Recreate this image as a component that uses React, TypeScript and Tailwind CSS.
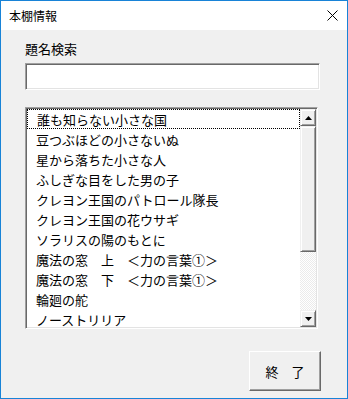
const titles = [
  "誰も知らない小さな国",
  "豆つぶほどの小さないぬ",
  "星から落ちた小さな人",
  "ふしぎな目をした男の子",
  "クレヨン王国のパトロール隊長",
  "クレヨン王国の花ウサギ",
  "ソラリスの陽のもとに",
  "魔法の窓　上　＜力の言葉①＞",
  "魔法の窓　下　＜力の言葉①＞",
  "輪廻の舵",
  "ノーストリリア",
]

const font = { fontFamily: '"Noto Sans CJK JP", "Noto Sans", sans-serif' }

const Arrow = ({ up }: { up?: boolean }) => (
  <svg width="7" height="4" viewBox="0 0 7 4">
    <polygon points={up ? "3.5,0 7,4 0,4" : "0,0 7,0 3.5,4"} fill="#000" />
  </svg>
)

const ScrollButton = ({ up }: { up?: boolean }) => (
  <div className="h-[17px] w-full flex items-center justify-center bg-[#f0f0f0] border border-t-[#f0f0f0] border-l-[#f0f0f0] border-b-[#696969] border-r-[#696969] shadow-[inset_1px_1px_0_#ffffff,inset_-1px_-1px_0_#a0a0a0]">
    <Arrow up={up} />
  </div>
)

export default function App() {
  return (
    <div
      className="w-[348px] h-[399px] border border-[#1883d7] flex flex-col bg-[#f0f0f0] text-black overflow-hidden"
      style={font}
    >
      {/* Title bar */}
      <div className="h-[29px] bg-white flex items-center justify-between pl-2 pr-[9px] shrink-0">
        <span className="text-[12px] leading-none">本棚情報</span>
        <svg width="11" height="11" viewBox="0 0 11 11">
          <path d="M0.5 0.5 L10.5 10.5 M10.5 0.5 L0.5 10.5" stroke="#000" strokeWidth="1" />
        </svg>
      </div>

      {/* Body */}
      <div className="flex-1 flex flex-col pl-6 pr-[26px] pt-[11px]">
        <div className="text-[13px] leading-[16px]">題名検索</div>

        <div className="mt-[6px] w-[295px] h-[27px] bg-white border border-t-[#a0a0a0] border-l-[#a0a0a0] border-b-white border-r-white shadow-[inset_1px_1px_0_#696969,inset_-1px_-1px_0_#e3e3e3]" />

        <div className="mt-[17px] w-[293px] h-[222px] bg-white border border-t-[#a0a0a0] border-l-[#a0a0a0] border-b-white border-r-white shadow-[inset_1px_1px_0_#696969,inset_-1px_-1px_0_#e3e3e3] flex p-px">
          <div className="flex-1 overflow-hidden">
            {titles.map((t, i) => (
              <div
                key={t}
                className={`h-[20px] flex items-center pl-[9px] text-[13px] leading-none whitespace-nowrap ${
                  i === 0 ? "border border-dotted border-black pl-[8px]" : ""
                }`}
              >
                {t}
              </div>
            ))}
          </div>
          <div className="w-[16px] flex flex-col">
            <ScrollButton up />
            <div className="h-[126px] bg-[#f0f0f0] border border-t-[#f0f0f0] border-l-[#f0f0f0] border-b-[#696969] border-r-[#696969] shadow-[inset_1px_1px_0_#ffffff,inset_-1px_-1px_0_#a0a0a0]" />
            <div className="flex-1 bg-[repeating-conic-gradient(#ffffff_0%_25%,#ebebeb_0%_50%)] bg-[length:2px_2px]" />
            <ScrollButton />
          </div>
        </div>

        <div className="flex justify-end mt-[22px]">
          <button className="w-[72px] h-[40px] bg-[#f0f0f0] border border-t-white border-l-white border-b-[#696969] border-r-[#696969] shadow-[inset_-1px_-1px_0_#a0a0a0] text-[13px] leading-none">
            終　了
          </button>
        </div>
      </div>
    </div>
  )
}
